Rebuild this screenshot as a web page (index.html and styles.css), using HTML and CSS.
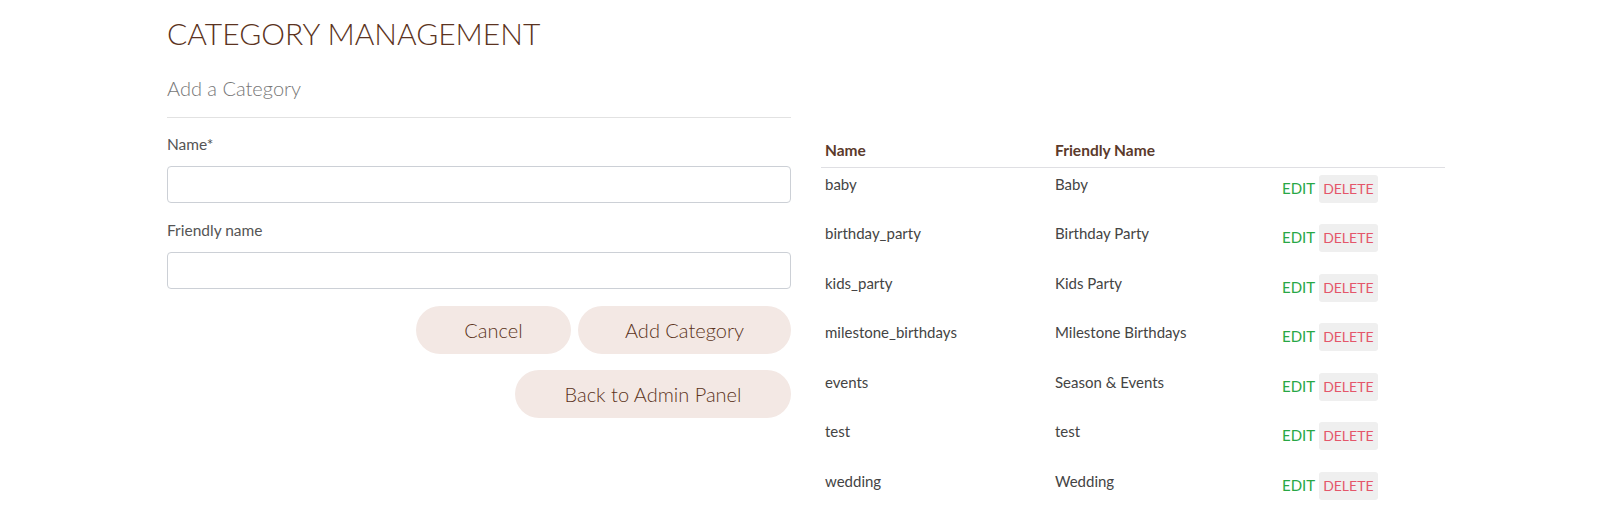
FILE: index.html
```html
<!DOCTYPE html>
<html>
<head>
<meta charset="utf-8">
<link rel="stylesheet" href="styles.css">
</head>
<body>
<div class="page">
  <h1 class="title">CATEGORY MANAGEMENT</h1>
  <div class="cols">
    <section class="form-col">
      <h2 class="subtitle">Add a Category</h2>
      <hr class="rule">
      <form class="form">
        <label class="label">Name*</label>
        <input class="input" type="text">
        <label class="label">Friendly name</label>
        <input class="input" type="text">
        <div class="btn-row">
          <button type="button" class="btn btn-cancel">Cancel</button>
          <button type="button" class="btn btn-add">Add Category</button>
        </div>
        <div class="btn-row">
          <button type="button" class="btn btn-back">Back to Admin Panel</button>
        </div>
      </form>
    </section>
    <section class="table-col">
      <table class="table">
        <thead>
          <tr><th class="c1">Name</th><th class="c2">Friendly Name</th><th class="c3"></th></tr>
        </thead>
        <tbody>
          <tr><td>baby</td><td>Baby</td><td class="actions"><span class="edit">EDIT</span><span class="delete">DELETE</span></td></tr>
          <tr><td>birthday_party</td><td>Birthday Party</td><td class="actions"><span class="edit">EDIT</span><span class="delete">DELETE</span></td></tr>
          <tr><td>kids_party</td><td>Kids Party</td><td class="actions"><span class="edit">EDIT</span><span class="delete">DELETE</span></td></tr>
          <tr><td>milestone_birthdays</td><td>Milestone Birthdays</td><td class="actions"><span class="edit">EDIT</span><span class="delete">DELETE</span></td></tr>
          <tr><td>events</td><td>Season &amp; Events</td><td class="actions"><span class="edit">EDIT</span><span class="delete">DELETE</span></td></tr>
          <tr><td>test</td><td>test</td><td class="actions"><span class="edit">EDIT</span><span class="delete">DELETE</span></td></tr>
          <tr><td>wedding</td><td>Wedding</td><td class="actions"><span class="edit">EDIT</span><span class="delete">DELETE</span></td></tr>
        </tbody>
      </table>
    </section>
  </div>
</div>
</body>
</html>
```

FILE: styles.css
```css
* { box-sizing: border-box; }
body {
  margin: 0;
  background: #fff;
  font-family: "Lato", "Open Sans", sans-serif;
  color: #4a4a4a;
}
.page {
  width: 1278px;
  margin: 0 auto 0 167px;
}
.title {
  margin: 0;
  padding-top: 15px;
  font-size: 30px;
  line-height: 36px;
  font-weight: 300;
  color: #5b3321;
}
.cols {
  display: grid;
  grid-template-columns: 624px 624px;
  column-gap: 30px;
}
.subtitle {
  margin: 25px 0 0;
  font-size: 20px;
  line-height: 24px;
  font-weight: 300;
  color: #777;
}
.rule {
  margin: 17px 0 0;
  border: 0;
  border-top: 1px solid #e2e2e2;
}
.form { display: flex; flex-direction: column; }
.label {
  font-size: 15.5px;
  line-height: 20px;
  font-weight: 400;
  color: #555;
  margin-top: 16px;
}
.input + .label { margin-top: 17px; }
.input {
  margin-top: 12px;
  height: 37px;
  border: 1px solid #ccd0d6;
  border-radius: 4px;
  background: #fff;
}
.btn-row {
  display: flex;
  justify-content: flex-end;
  gap: 7px;
  margin-top: 17px;
}
.form .btn-row + .btn-row { margin-top: 16px; }
.btn {
  height: 48px;
  border: 0;
  border-radius: 24px;
  background: #f3e8e4;
  color: #5b3321;
  font-family: inherit;
  font-size: 20px;
  font-weight: 300;
  cursor: pointer;
}
.btn-cancel { width: 155px; }
.btn-add { width: 213px; }
.btn-back { width: 276px; }
.table-col { padding-top: 30px; }
.table {
  width: 624px;
  border-collapse: collapse;
  table-layout: fixed;
  margin-top: 54px;
}
.c1 { width: 230px; }
.c2 { width: 227px; }
.c3 { width: 167px; }
th {
  text-align: left;
  font-size: 15.5px;
  font-weight: 700;
  color: #5b3a2b;
  padding: 6px 4px 8px;
  line-height: 18px;
  border-bottom: 1px solid #dfdfe3;
}
td {
  vertical-align: top;
  font-size: 15px;
  font-weight: 400;
  color: #444;
  padding: 6px 4px 0;
  line-height: 20px;
  height: 49.6px;
}
.actions { padding-top: 6px; }
.edit {
  color: #28a745;
  font-size: 15px;
  display: inline-block;
  line-height: 28px;
  margin-right: 4px;
}
.delete {
  display: inline-block;
  background: #efefef;
  color: #e4566a;
  font-size: 14px;
  line-height: 28px;
  height: 28px;
  padding: 0 4px;
  border-radius: 3px;
}
```
